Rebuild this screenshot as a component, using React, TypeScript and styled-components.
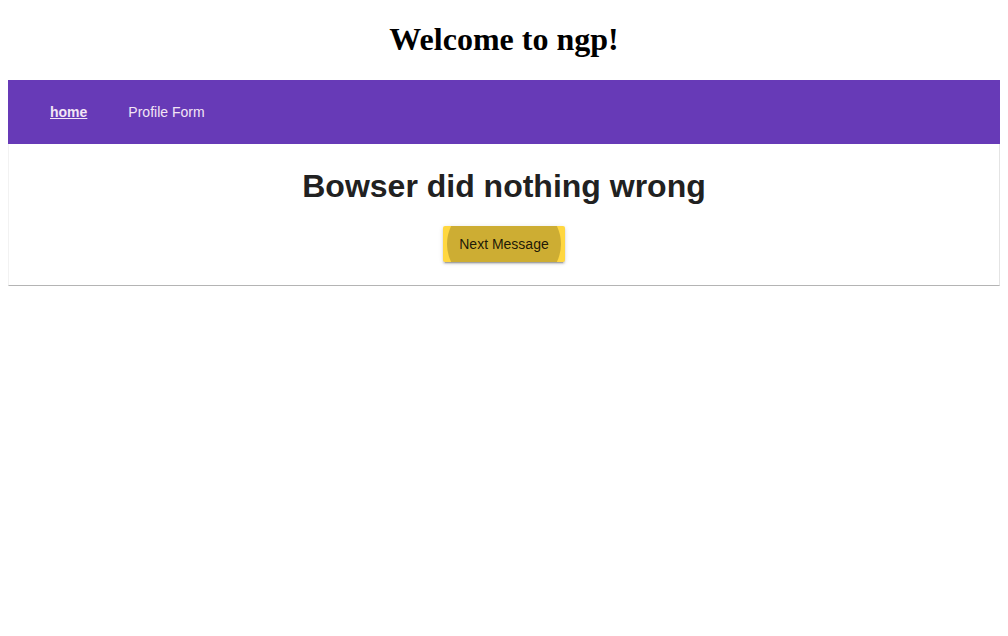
import React from "react";
import styled, { createGlobalStyle } from "styled-components";

const GlobalStyle = createGlobalStyle`
  body {
    margin: 0 8px 8px;
    background: #fff;
    font-family: "Liberation Serif", "Times New Roman", serif;
  }
`;

const Title = styled.h1`
  margin: 21.44px 0;
  font-size: 32px;
  line-height: 37px;
  font-weight: bold;
  text-align: center;
  color: #000;
`;

const NavBar = styled.nav`
  display: flex;
  align-items: center;
  height: 64px;
  padding: 0 26px;
  gap: 9px;
  background: #673ab7;
  font-family: "Liberation Sans", Arial, sans-serif;
  font-size: 14px;
`;

const NavLink = styled.a<{ $active?: boolean }>`
  padding: 0 16px;
  line-height: 48px;
  color: #f3e5f5;
  font-weight: ${(p) => (p.$active ? "bold" : "normal")};
  text-decoration: ${(p) => (p.$active ? "underline" : "none")};
  cursor: pointer;
`;

const Card = styled.div`
  display: flex;
  flex-direction: column;
  align-items: center;
  padding: 24px 16px 23px;
  background: #fff;
  border-left: 1px solid #f2f2f2;
  border-right: 1px solid #e4e4e4;
  border-bottom: 1px solid #b4b4b4;
  box-shadow: 0 1px 1px rgba(0, 0, 0, 0.12);
  font-family: "Liberation Sans", Arial, sans-serif;
`;

const Message = styled.h2`
  margin: 0 0 22px;
  font-size: 32px;
  line-height: 36px;
  font-weight: bold;
  color: #212121;
`;

const RaisedButton = styled.button`
  position: relative;
  overflow: hidden;
  min-width: 88px;
  height: 36px;
  padding: 0 16px;
  border: none;
  border-radius: 2px;
  background: #ffd740;
  color: rgba(0, 0, 0, 0.87);
  font-family: "Liberation Sans", Arial, sans-serif;
  font-size: 14px;
  box-shadow: 0 3px 1px -2px rgba(0, 0, 0, 0.2), 0 2px 2px 0 rgba(0, 0, 0, 0.14),
    0 1px 5px 0 rgba(0, 0, 0, 0.12);
  cursor: pointer;

  &::before {
    content: "";
    position: absolute;
    left: 4px;
    right: 4px;
    top: -30px;
    bottom: -30px;
    border-radius: 50%;
    background: #cdad33;
  }
`;

const ButtonLabel = styled.span`
  position: relative;
`;

export default function App() {
  return (
    <>
      <GlobalStyle />
      <Title>Welcome to ngp!</Title>
      <NavBar>
        <NavLink $active>home</NavLink>
        <NavLink>Profile Form</NavLink>
      </NavBar>
      <Card>
        <Message>Bowser did nothing wrong</Message>
        <RaisedButton>
          <ButtonLabel>Next Message</ButtonLabel>
        </RaisedButton>
      </Card>
    </>
  );
}
